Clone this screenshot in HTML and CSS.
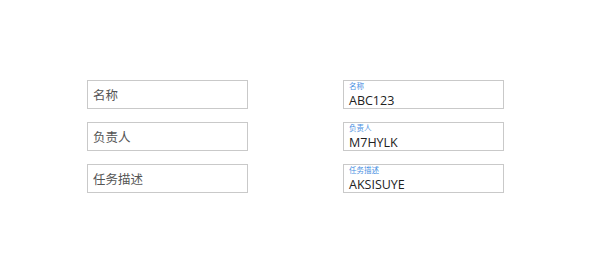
FILE: index.html
```html
<!DOCTYPE html>
<html lang="zh">
<head>
    <meta charset="UTF-8">
    <meta name="viewport" content="width=device-width, initial-scale=1.0">
    <title>表单</title>
    <link rel="stylesheet" href="styles.css">
</head>
<body>
    <div class="page">
        <div class="column">
            <div class="field"><span class="placeholder">名称</span></div>
            <div class="field"><span class="placeholder">负责人</span></div>
            <div class="field"><span class="placeholder">任务描述</span></div>
        </div>
        <div class="column">
            <div class="field filled">
                <span class="label">名称</span>
                <span class="value">ABC123</span>
            </div>
            <div class="field filled">
                <span class="label">负责人</span>
                <span class="value">M7HYLK</span>
            </div>
            <div class="field filled">
                <span class="label">任务描述</span>
                <span class="value">AKSISUYE</span>
            </div>
        </div>
    </div>
</body>
</html>
```

FILE: styles.css
```css
body {
    margin: 0;
    padding: 0;
    background-color: #fff;
    font-family: "Open Sans", "Noto Sans CJK SC", sans-serif;
    color: #333;
}

.page {
    display: flex;
    gap: 95px;
    padding: 80px 0 0 87px;
}

.column {
    display: flex;
    flex-direction: column;
    gap: 13px;
}

.field {
    box-sizing: border-box;
    width: 161px;
    height: 29px;
    border: 1px solid #c9c9c9;
    display: flex;
    flex-direction: column;
    justify-content: center;
    padding: 0 5px;
}

.placeholder {
    font-size: 12.5px;
    color: #555;
}

.filled {
    justify-content: flex-start;
    padding-top: 1px;
}

.label {
    font-size: 7.5px;
    line-height: 9px;
    margin-bottom: 2px;
    color: #4a90e2;
}

.value {
    font-size: 12.5px;
    line-height: 15px;
    color: #222;
}
```
